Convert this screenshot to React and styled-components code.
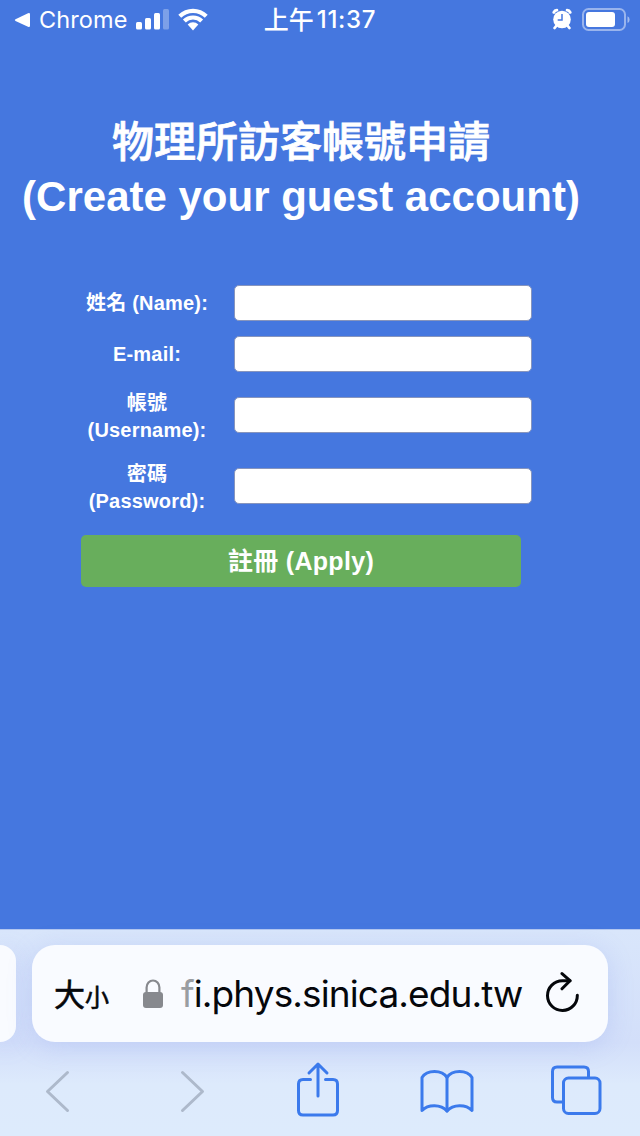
import React, { Component } from 'react'
import styled, { createGlobalStyle } from 'styled-components';

const GlobalStyle = createGlobalStyle`
    * {
        box-sizing: border-box;
    }

    body {
        margin: 0;
        background: #4577df;
    }
`;

const Screen = styled.div`
    display: flex;
    flex-direction: column;
    width: 640px;
    height: 1136px;
    overflow: hidden;
    background: #4577df;
    font-family: "Liberation Sans", "Noto Sans CJK TC", sans-serif;
    color: white;
`;

const StatusBar = styled.header`
    display: grid;
    grid-template-columns: 250px 1fr 250px;
    align-items: center;
    height: 40px;
    font-family: Inter, "Noto Sans CJK TC", sans-serif;
    font-size: 24px;
    line-height: 40px;
`;

const StatusLeft = styled.div`
    display: flex;
    align-items: center;
    padding-left: 14px;
`;

const BackApp = styled.span`
    width: 89px;
    margin: 0 8px 0 9px;
    font-size: 23.5px;
    letter-spacing: 0.1px;
    white-space: nowrap;
`;

const Clock = styled.div`
    display: flex;
    align-items: center;
    justify-content: center;
    gap: 3px;
    font-size: 25px;
    font-weight: 500;
    white-space: nowrap;
`;

const Digits = styled.span`
    font-size: 24px;
    letter-spacing: 0.7px;
`;

const StatusRight = styled.div`
    display: flex;
    align-items: center;
    justify-content: flex-end;
    gap: 9px;
    padding: 0 10px 2px 0;
`;

const Page = styled.main`
    flex: 1;
    padding-top: 75px;
`;

const Title = styled.h1`
    width: 602px;
    margin: 0;
    font-size: 42px;
    font-weight: 500;
    line-height: 55px;
    text-align: center;
    white-space: nowrap;
    -webkit-text-stroke: 0.8px white;
`;

const TitleLatin = styled.span`
    display: block;
    font-weight: bold;
    line-height: 53px;
    -webkit-text-stroke: 0;
`;

const Form = styled.div`
    width: 451px;
    margin: 54px 0 0 81px;
`;

const Row = styled.div`
    display: grid;
    grid-template-columns: 132px 298px;
    column-gap: 21px;
    align-items: center;
    height: ${props => props.$tall ? '71px' : '51px'};
`;

const Label = styled.label`
    padding-top: ${props => props.$tall ? '5px' : '2px'};
    font-size: 20px;
    font-weight: bold;
    letter-spacing: 0.2px;
    line-height: 27px;
    text-align: center;
    white-space: nowrap;
`;

const Input = styled.input`
    width: 298px;
    height: 36px;
    padding: 0 8px;
    border: 1px solid #8795bd;
    border-radius: 5px;
    background: white;
    outline: none;
`;

const Apply = styled.button`
    display: block;
    width: 440px;
    height: 52px;
    margin-top: 14px;
    padding: 0;
    border: none;
    border-radius: 5px;
    background: #68ae5c;
    color: white;
    font-family: inherit;
    font-size: 25px;
    font-weight: bold;
    letter-spacing: 0.3px;
    line-height: 52px;
`;

const Browser = styled.footer`
    height: 207px;
    padding-top: 15px;
    border-top: 1px solid #b3c7f0;
    background: linear-gradient(#d9e6fb, #d3dffa 55%, #ddeafc 75%, #ddebfc);
    color: #05070b;
`;

const Tabs = styled.div`
    display: flex;
    gap: 16px;
    height: 97px;
`;

const PreviousTab = styled.div`
    width: 16px;
    border-radius: 0 20px 20px 0;
    background: #f9fbff;
    box-shadow: 0 4px 24px rgba(130, 150, 235, 0.22);
`;

const AddressBar = styled.div`
    display: flex;
    align-items: center;
    width: 576px;
    padding-left: 22px;
    border-radius: 23px;
    background: #f9fbff;
    box-shadow: 0 4px 24px rgba(130, 150, 235, 0.25);
`;

const Address = styled.span`
    width: 343px;
    margin: 0 22px 0 17px;
    font-family: Inter, sans-serif;
    font-size: 37px;
    letter-spacing: -0.9px;
    line-height: 50px;
    white-space: nowrap;
`;

const Faded = styled.span`
    color: #9a9da1;
`;

const TextSize = styled.div`
    display: flex;
    align-items: baseline;
    width: 55px;
    margin-right: 33px;
    padding-top: 2px;
    font-family: "Noto Sans CJK TC", sans-serif;
    font-size: 31px;
    font-weight: 400;
    line-height: 50px;
    -webkit-text-stroke: 0.6px currentColor;
`;

const SmallChar = styled.span`
    font-size: 24px;
`;

const Toolbar = styled.nav`
    display: grid;
    grid-template-columns: 134px 118px 124px 130px 52px;
    padding: 19px 0 0 44px;
`;

const Icon = styled.svg`
    display: block;
    flex: none;
    fill: none;
    stroke: ${props => props.$color || 'currentColor'};
    stroke-width: 3;
    stroke-linecap: round;
    stroke-linejoin: round;
`;

const Solid = styled.svg`
    display: block;
    flex: none;
    fill: ${props => props.$color || 'currentColor'};
`;

const blue = '#3b7aec';
const grey = '#adb9cb';

const fields = [
    { id: 'name', lines: ['姓名 (Name):'] },
    { id: 'email', lines: ['E-mail:'] },
    { id: 'username', lines: ['帳號', '(Username):'] },
    { id: 'password', lines: ['密碼', '(Password):'], type: 'password' },
];

const Signal = () => (
    <Solid width="42" height="24" viewBox="0 0 42 24">
        <rect x="0" y="14" width="6" height="7.5" rx="1.5"/>
        <rect x="9" y="10" width="6" height="11.5" rx="1.5"/>
        <rect x="18" y="5" width="6" height="16.5" rx="1.5"/>
        <rect x="27" y="1" width="6" height="20.5" rx="1.5" opacity="0.3"/>
    </Solid>
);

const Wifi = () => (
    <Solid width="30" height="24" viewBox="0 0 30 24">
        <path d="M0.3 6.8A21 21 0 0 1 29.7 6.8L26.8 9.8A17 17 0 0 0 3.2 9.8Z"/>
        <path d="M4.9 11.6A14.2 14.2 0 0 1 25.1 11.6L22.2 14.6A10.2 10.2 0 0 0 7.8 14.6Z"/>
        <path d="M9.7 16.5A7.6 7.6 0 0 1 20.3 16.5L15 22.5Z"/>
    </Solid>
);

const Alarm = () => (
    <svg width="20" height="22" viewBox="0 0 20 22">
        <circle cx="10" cy="11.5" r="8.8" fill="white"/>
        <path d="M1.8 4.4A3.6 3.6 0 0 1 4.9 2.2M18.2 4.4A3.6 3.6 0 0 0 15.1 2.2M4.2 18L2.6 20M15.8 18L17.4 20" fill="none" stroke="white" strokeWidth="2.8" strokeLinecap="round"/>
        <path d="M10 6V12H5.7" fill="none" stroke="#4577df" strokeWidth="1.5"/>
    </svg>
);

const Battery = () => (
    <svg width="49" height="24" viewBox="0 0 49 24">
        <rect x="2" y="2" width="42" height="21" rx="5.5" fill="none" stroke="white" strokeOpacity="0.45" strokeWidth="2"/>
        <rect x="5" y="5" width="29" height="15" rx="3" fill="white"/>
        <path d="M46.5 9.3A3.7 3.7 0 0 1 46.5 16Z" fill="white" fillOpacity="0.5"/>
    </svg>
);

class App extends Component {
  render() {
    return (
        <Screen>
            <GlobalStyle/>
            <StatusBar>
                <StatusLeft>
                    <Solid width="16" height="16" viewBox="0 0 16 16">
                        <path d="M1.5 7.3L14 1.2Q16 0.5 16 2.3V13.7Q16 15.5 14 14.8L1.5 8.9Q0 8.1 1.5 7.3Z"/>
                    </Solid>
                    <BackApp>Chrome</BackApp>
                    <Signal/>
                    <Wifi/>
                </StatusLeft>
                <Clock>上午<Digits>11:37</Digits></Clock>
                <StatusRight>
                    <Alarm/>
                    <Battery/>
                </StatusRight>
            </StatusBar>

            <Page>
                <Title>
                    物理所訪客帳號申請
                    <TitleLatin>(Create your guest account)</TitleLatin>
                </Title>

                <Form>
                    {fields.map(field => (
                        <Row key={field.id} $tall={field.lines.length > 1}>
                            <Label htmlFor={field.id} $tall={field.lines.length > 1}>
                                {field.lines.map(line => <div key={line}>{line}</div>)}
                            </Label>
                            <Input id={field.id} type={field.type || 'text'}/>
                        </Row>
                    ))}
                    <Apply>註冊 (Apply)</Apply>
                </Form>
            </Page>

            <Browser>
                <Tabs>
                    <PreviousTab/>
                    <AddressBar>
                        <TextSize>大<SmallChar>小</SmallChar></TextSize>
                        <Solid width="22" height="30" viewBox="0 0 22 30" $color="#87898e">
                            <rect x="1" y="13" width="20" height="16" rx="3"/>
                            <path d="M4.6 14V8.5a6.4 7 0 0 1 12.8 0V14" fill="none" stroke="#87898e" strokeWidth="2.2"/>
                        </Solid>
                        <Address><Faded>f</Faded>i.phys.sinica.edu.tw</Address>
                        <Icon width="36" height="44" viewBox="0 0 36 44">
                            <path d="M24 8.7H16.4A14.9 14.9 0 1 0 31.3 23.2"/>
                            <path d="M16 1.6L24 8.7L16 16.8"/>
                        </Icon>
                    </AddressBar>
                </Tabs>
                <Toolbar>
                    <Icon width="28" height="56" viewBox="0 0 28 56" $color={grey}>
                        <path d="M23.5 11.5L3.5 30.5L23.5 49.5"/>
                    </Icon>
                    <Icon width="28" height="56" viewBox="0 0 28 56" $color={grey}>
                        <path d="M4.5 11.5L24.5 30.5L4.5 49.5"/>
                    </Icon>
                    <Icon width="44" height="56" viewBox="0 0 44 56" $color={blue}>
                        <path d="M14.5 18.5H7Q2.5 18.5 2.5 23V49.5Q2.5 54 7 54H37Q41.5 54 41.5 49.5V23Q41.5 18.5 37 18.5H29.5"/>
                        <path d="M22 35V3.5M13 12L22 3L31 12"/>
                    </Icon>
                    <Icon width="54" height="56" viewBox="0 0 54 56" $color={blue}>
                        <path d="M27 16.5C22 8.5 7 8.5 2 16.5V49.5C8 43 21 43 27 50C33 43 46 43 52 49.5V16.5C47 8.5 32 8.5 27 16.5Z"/>
                        <path d="M27 16.5V50"/>
                    </Icon>
                    <Icon width="52" height="56" viewBox="0 0 52 56" $color={blue}>
                        <path d="M38.5 16V10.5Q38.5 6 34 6H7Q2.5 6 2.5 10.5V36.5Q2.5 41 7 41H12.5"/>
                        <rect x="13.5" y="17" width="36.5" height="35.5" rx="5"/>
                    </Icon>
                </Toolbar>
            </Browser>
        </Screen>
    )
  }
}

export default App;
